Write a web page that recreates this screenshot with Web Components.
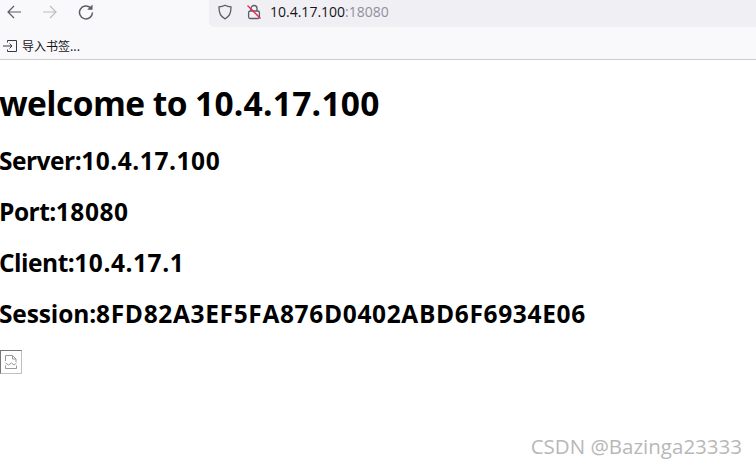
<!DOCTYPE html>
<html>
<head>
<meta charset="utf-8">
<style>
html,body{margin:0;padding:0;background:#fff;}
body{width:756px;height:468px;overflow:hidden;position:relative;font-family:"Open Sans","Noto Sans CJK SC",sans-serif;}
</style>
</head>
<body>
<browser-toolbar host="10.4.17.100" port=":18080"></browser-toolbar>
<bookmark-bar label="导入书签..."></bookmark-bar>
<welcome-page>
    <info-line slot="title" big label="welcome to " value="10.4.17.100"></info-line>
    <info-line label="Server:" value="10.4.17.100"></info-line>
    <info-line label="Port:" value="18080"></info-line>
    <info-line label="Client:" value="10.4.17.1"></info-line>
    <info-line style="--label-track:-.12px;--value-track:.65px" label="Session:" value="8FD82A3EF5FA876D0402ABD6F6934E06"></info-line>
</welcome-page>
<broken-image></broken-image>
<water-mark>CSDN @Bazinga23333</water-mark>

<script>
class BrowserToolbar extends HTMLElement{
    constructor(){
        super();
        this.shadowDOM=this.attachShadow({mode:"open"});
    }
    connectedCallback(){
        this.shadowDOM.innerHTML=`
        <style>
        :host{display:flex;height:27px;background:#f9f9fb;box-sizing:border-box;}
        .nav{display:flex;width:209px;flex:none;}
        .nav svg{flex:none;}
        .back{margin:4px 0 0 6px;}
        .forward{margin:4px 0 0 20px;}
        .reload{margin:4px 0 0 20px;}
        .url{flex:1;display:flex;align-items:center;height:27px;background:#f0f0f4;border-bottom-left-radius:5px;padding-left:8px;box-sizing:border-box;}
        .shield{margin-top:-3px;}
        .lock{margin:-3px 0 0 13px;}
        .addr{margin:-5px 0 0 8px;font:14px "Open Sans","Liberation Sans",sans-serif;color:#15141a;white-space:nowrap;}
        .addr span{color:#8f8f9d;}
        </style>
        <div class="nav">
            <svg class="back" width="16" height="16" viewBox="0 0 16 16" fill="none" stroke="#5b5b66" stroke-width="1.2"><path d="M15 8H2M8 2L2 8l6 6"/></svg>
            <svg class="forward" width="16" height="16" viewBox="0 0 16 16" fill="none" stroke="#bdbdc2" stroke-width="1.2"><path d="M1 8h13M8 2l6 6-6 6"/></svg>
            <svg class="reload" width="16" height="16" viewBox="0 0 16 16" fill="none" stroke="#5b5b66" stroke-width="1.5"><path d="M12.600 3.800A6.500 6.500 0 1 0 14.500 8.600"/><path d="M14.500 0.500v5.300H9.200z" fill="#5b5b66" stroke="none"/></svg>
        </div>
        <div class="url">
            <svg class="shield" width="16" height="16" viewBox="0 0 16 16" fill="none" stroke="#5b5b66" stroke-width="1.3"><path d="M8 1.200c2 1.100 3.800 1.500 6 1.600.2 5.700-1.500 9.900-6 12-4.500-2.100-6.200-6.300-6-12 2.200-.1 4-.5 6-1.600z"/></svg>
            <svg class="lock" width="16" height="16" viewBox="0 0 16 16" fill="none"><path d="M5 7V4.500a3 3 0 0 1 6 0V7" stroke="#5b5b66" stroke-width="1.300"/><rect x="2.600" y="7" width="10.800" height="7.500" rx="1.500" stroke="#5b5b66" stroke-width="1.300"/><path d="M1.500 1.500l13 13" stroke="#e22850" stroke-width="1.300"/></svg>
            <div class="addr">${this.getAttribute("host")}<span>${this.getAttribute("port")}</span></div>
        </div>`;
    }
}

class BookmarkBar extends HTMLElement{
    constructor(){
        super();
        this.shadowDOM=this.attachShadow({mode:"open"});
    }
    connectedCallback(){
        this.shadowDOM.innerHTML=`
        <style>
        :host{display:flex;align-items:center;height:33px;padding:5px 0 0 3px;background:#f9f9fb;border-bottom:1px solid #ccc;box-sizing:border-box;}
        span{margin-left:5px;font:12px "Noto Sans CJK SC",sans-serif;color:#15141a;white-space:nowrap;}
        </style>
        <svg width="14" height="14" viewBox="0 0 14 14" fill="none" stroke="#3a3a44" stroke-width="1"><path d="M4.500 3.500V1.500h9v11h-9v-2"/><path d="M0 7h9M6.500 4.500L9 7l-2.500 2.500"/></svg>
        <span>${this.getAttribute("label")}</span>`;
    }
}

class WelcomePage extends HTMLElement{
    constructor(){
        super();
        this.shadowDOM=this.attachShadow({mode:"open"});
        this.shadowDOM.innerHTML=`
        <style>
        :host{display:block;color:#000;margin-left:-1px;padding-top:20px;}
        .lines{display:flex;flex-direction:column;gap:17px;padding-top:18px;}
        </style>
        <slot name="title"></slot>
        <div class="lines"><slot></slot></div>`;
    }
}

class InfoLine extends HTMLElement{
    constructor(){
        super();
        this.shadowDOM=this.attachShadow({mode:"open"});
    }
    connectedCallback(){
        this.shadowDOM.innerHTML=`
        <style>
        :host{display:block;font-size:24.500px;line-height:34px;font-weight:700;white-space:nowrap;}
        :host([big]){font-size:33.500px;line-height:46px;}
        .label{letter-spacing:var(--label-track,-.5px);white-space:pre;}
        .value{letter-spacing:var(--value-track,.55px);}
        :host([big]) .label{letter-spacing:-.55px;}
        :host([big]) .value{letter-spacing:.25px;}
        </style>
        <span class="label">${this.getAttribute("label")}</span><span class="value">${this.getAttribute("value")}</span>`;
    }
}

class BrokenImage extends HTMLElement{
    constructor(){
        super();
        this.shadowDOM=this.attachShadow({mode:"open"});
        this.shadowDOM.innerHTML=`
        <style>
        :host{display:flex;align-items:center;justify-content:center;width:22px;height:24px;margin-top:19px;box-sizing:border-box;border:1px solid;border-color:#767676 #c0c0c0 #c0c0c0 #767676;}
        </style>
        <svg width="16" height="16" viewBox="0 0 16 16" fill="none" stroke="#999" stroke-width="1"><path d="M2.500 7V1.500h7l3.500 3.500v3M9.500 1.500V5H13"/><path d="M2.500 9l3 2 3-2 2.500 2 2.500-2M2.500 11.500v3h11v-3"/></svg>`;
    }
}

class WaterMark extends HTMLElement{
    constructor(){
        super();
        this.shadowDOM=this.attachShadow({mode:"open"});
        this.shadowDOM.innerHTML=`
        <style>
        :host{position:absolute;right:14px;top:433px;font:20.500px "Open Sans",sans-serif;line-height:26px;color:#b8b8b8;white-space:nowrap;}
        </style>
        <slot></slot>`;
    }
}

customElements.define("browser-toolbar",BrowserToolbar);
customElements.define("bookmark-bar",BookmarkBar);
customElements.define("welcome-page",WelcomePage);
customElements.define("info-line",InfoLine);
customElements.define("broken-image",BrokenImage);
customElements.define("water-mark",WaterMark);
</script>
</body>
</html>
